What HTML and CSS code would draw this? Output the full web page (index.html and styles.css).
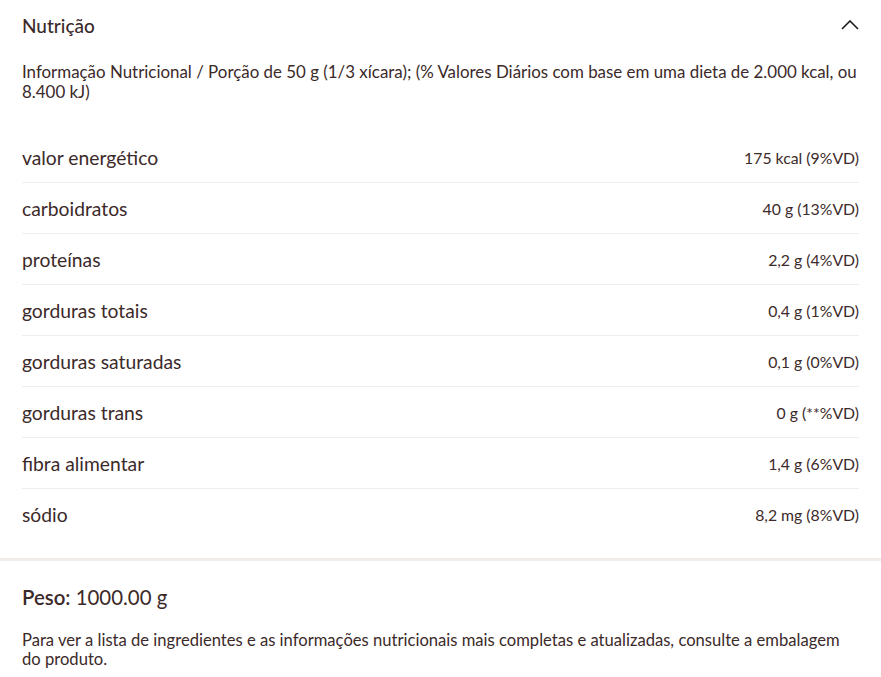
FILE: index.html
```html
<!DOCTYPE html>
<html lang="pt-BR">
<head>
<meta charset="utf-8">
<link rel="stylesheet" href="styles.css">
</head>
<body>
<section class="panel">
  <header class="head">
    <h2 class="title">Nutrição</h2>
    <svg class="chev" width="18" height="10" viewBox="0 0 18 10"><path d="M1 9 L9 1 L17 9" fill="none" stroke="#1a1a1a" stroke-width="1.6"/></svg>
  </header>
  <p class="sub">Informação Nutricional / Porção de 50 g (1/3 xícara); (% Valores Diários com base em uma dieta de 2.000 kcal, ou 8.400 kJ)</p>
  <div class="table">
    <div class="row"><span class="lbl">valor energético</span><span class="val">175 kcal (9%VD)</span></div>
    <div class="row"><span class="lbl">carboidratos</span><span class="val">40 g (13%VD)</span></div>
    <div class="row"><span class="lbl">proteínas</span><span class="val">2,2 g (4%VD)</span></div>
    <div class="row"><span class="lbl">gorduras totais</span><span class="val">0,4 g (1%VD)</span></div>
    <div class="row"><span class="lbl">gorduras saturadas</span><span class="val">0,1 g (0%VD)</span></div>
    <div class="row"><span class="lbl">gorduras trans</span><span class="val">0 g (**%VD)</span></div>
    <div class="row"><span class="lbl">fibra alimentar</span><span class="val">1,4 g (6%VD)</span></div>
    <div class="row"><span class="lbl">sódio</span><span class="val">8,2 mg (8%VD)</span></div>
  </div>
</section>
<section class="foot">
  <p class="peso"><strong>Peso:</strong> 1000.00 g</p>
  <p class="note">Para ver a lista de ingredientes e as informações nutricionais mais completas e atualizadas, consulte a embalagem do produto.</p>
</section>
</body>
</html>
```
FILE: styles.css
```css
* { box-sizing: border-box; }
html, body { margin: 0; padding: 0; background: #fff; }
body {
  font-family: Lato, "Open Sans", sans-serif;
  color: #3c2a2a;
  width: 881px;
}
.panel {
  padding: 0 22px 18px 22px;
  border-bottom: 3px solid #f0ece8;
}
.head {
  height: 50px;
  display: flex;
  align-items: center;
  justify-content: space-between;
}
.title {
  margin: 0;
  font-size: 19px;
  font-weight: 500;
  color: #3c2a2a;
}
.sub {
  margin: 12px 0 0 0;
  font-size: 16.9px;
  line-height: 20px;
  padding-right: 2px;
}
.table { margin-top: 30px; }
.row {
  height: 51px;
  display: flex;
  align-items: center;
  justify-content: space-between;
  border-bottom: 1px solid #f2ede8;
}
.row:last-child { border-bottom: none; }
.lbl { font-size: 19.3px; }
.val { font-size: 15.8px; }
.foot { padding: 23px 22px 0 22px; }
.peso {
  margin: 0;
  font-size: 20.4px;
  line-height: 26px;
}
.peso strong { font-weight: 600; }
.note {
  margin: 21px 0 0 0;
  font-size: 16.6px;
  line-height: 19px;
  padding-right: 2px;
}
```
